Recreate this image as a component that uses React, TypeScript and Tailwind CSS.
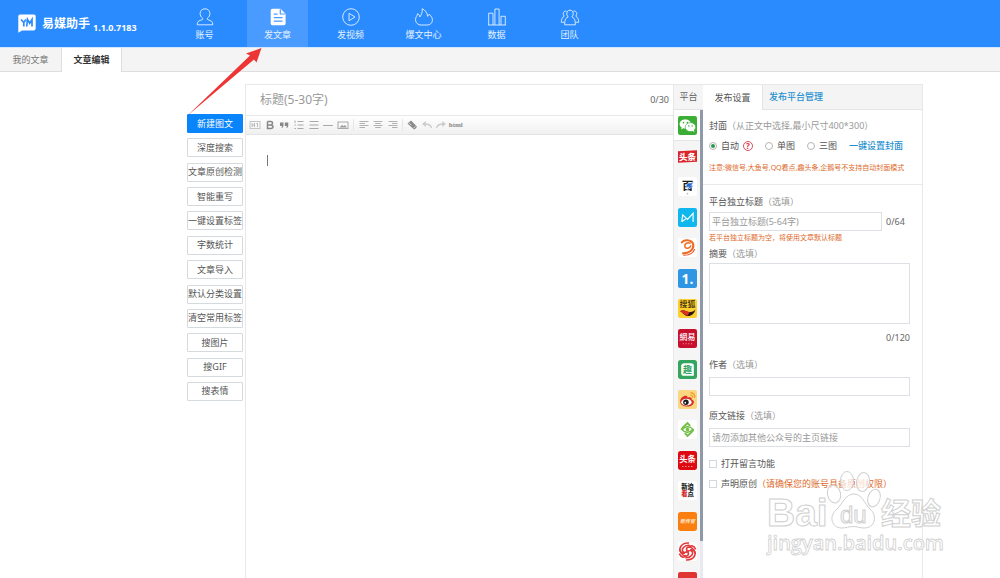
import { useState } from 'react';
import type { ReactNode } from 'react';
import clsx from 'clsx';

const navItems = [
  { id: 'account', label: '账号' },
  { id: 'article', label: '发文章' },
  { id: 'video', label: '发视频' },
  { id: 'hot', label: '爆文中心' },
  { id: 'data', label: '数据' },
  { id: 'team', label: '团队' },
];

const actions = [
  '新建图文',
  '深度搜索',
  '文章原创检测',
  '智能重写',
  '一键设置标签',
  '字数统计',
  '文章导入',
  '默认分类设置',
  '清空常用标签',
  '搜图片',
  '搜GIF',
  '搜表情',
];

const platforms = [
  'wechat', 'toutiao', 'baijia', 'dayu', 'kuaichuan', 'yidian', 'sohu', 'netease',
  'qutoutiao', 'weibo', 'iqiyi', 'toutiao2', 'sina', 'souhu', 'ifeng', 'more',
];

function NavIcon({ id }: { id: string }) {
  return (
    <svg className="h-[18px] w-5" viewBox="0 0 20 18" fill="none" stroke="#e4f1ff" strokeWidth="0.9" strokeLinejoin="round" aria-hidden="true">
      {id === 'account' && (
        <path d="M7.600 10.200C6 8.900 5.100 7.500 5.100 5.600C5.100 2.800 7 .8 10 .8C13 .8 14.900 2.800 14.900 5.600C14.900 7.500 14 8.900 12.400 10.200V11.400L16.500 13.200Q17.800 14 17.800 16.800H2.200Q2.200 14 3.500 13.200L7.600 11.400Z" />
      )}
      {id === 'article' && (
        <>
          <path d="M4.300 .8H12.500L17.600 5.800V15.500Q17.600 17.200 16 17.200H4.300Q2.700 17.200 2.700 15.500V2.500Q2.700 .8 4.300 .8Z" fill="#fff" stroke="none" />
          <path d="M12.300 1.200V6H17.300M5.800 6.200H9.600M5.800 9.700H14.500M5.800 13.200H14.500" stroke="#4a9bff" strokeWidth="1.200" />
        </>
      )}
      {id === 'video' && (
        <>
          <circle cx="10" cy="9" r="8.300" />
          <path d="M8 5.300L14 9L8 12.700Z" />
        </>
      )}
      {id === 'hot' && (
        <path d="M6 17C3 16.200 1.400 14 1.500 11.500C1.600 9 3.200 8 3.600 5.600C5 6.300 5.600 7.500 5.800 9C7.600 6.800 8.500 4.200 8.200 .7C11.500 2.300 13.300 5 13.600 8.300C14.600 7.900 15 7.200 15.100 6.100C17.500 8.200 18.700 10.500 18.400 12.600C18 15.200 16.400 16.600 13.900 17Z" />
      )}
      {id === 'data' && (
        <path d="M1 17H19M1.700 17V5.200H6V17M7.900 17V1H12.100V17M14 17V8.300H18.300V17" />
      )}
      {id === 'team' && (
        <>
          <path d="M8.200 8.900C5.800 7 6.500 2.200 10 2.200C13.500 2.200 14.200 7 11.800 8.900C14.500 9.900 15.400 12.200 15.400 16.800H4.600C4.600 12.200 5.500 9.900 8.200 8.900Z" />
          <path d="M6.700 3.200C3.800 2.200 2 5.600 4.200 8.200C2.200 9.200 1.300 11.500 1.300 14.300H4.400M13.300 3.200C16.200 2.200 18 5.600 15.800 8.200C17.800 9.200 18.700 11.500 18.700 14.300H15.600" />
        </>
      )}
    </svg>
  );
}

function PlatformIcon({ id }: { id: string }) {
  const cjk = '"Noto Sans CJK SC", sans-serif';
  return (
    <svg className="h-[19px] w-[19px]" viewBox="0 0 18 18" role="img" aria-label={id} fontFamily={cjk} textAnchor="middle">
      {id === 'wechat' && (
        <>
          <rect width="18" height="18" rx="2" fill="#3cae36" />
          <path d="M7 3.200C3.900 3.200 1.500 5.100 1.500 7.600C1.500 9 2.300 10.200 3.500 11L3 12.800L5.100 11.700Q6 12 7.200 12L11 9.500L12.500 7.500C12.200 5 9.900 3.200 7 3.200Z" fill="#fff" />
          <ellipse cx="11.800" cy="10.500" rx="5" ry="4.200" fill="#fff" stroke="#3cae36" strokeWidth=".6" />
          <path d="M13.500 13.800L15.600 15.300L15 13Z" fill="#fff" />
          <circle cx="5.200" cy="6.200" r=".8" fill="#3cae36" />
          <circle cx="8.900" cy="6.200" r=".8" fill="#3cae36" />
          <circle cx="10.200" cy="9.500" r=".7" fill="#3cae36" />
          <circle cx="13.400" cy="9.500" r=".7" fill="#3cae36" />
        </>
      )}
      {id === 'toutiao' && (
        <>
          <path d="M0 4L18 3V14L0 15Z" fill="#d9252b" />
          <text x="9" y="12" fontSize="8" fontWeight="900" fill="#fff">头条</text>
        </>
      )}
      {id === 'baijia' && (
        <>
          <rect width="18" height="18" rx="2" fill="#fff" />
          <text x="9" y="12.500" fontSize="11" fontWeight="700" fill="#1c1c1c">百</text>
          <path d="M8.500 6.500L15 5L12 8.300H15L8 12.700L10.500 9.300H7.300Z" fill="#2568d8" stroke="#fff" strokeWidth=".4" />
          <circle cx="9" cy="15.800" r=".8" fill="#bbb" />
        </>
      )}
      {id === 'dayu' && (
        <>
          <rect width="18" height="18" rx="2" fill="#10b7ee" />
          <path d="M3.500 13L4.500 6.500L9 10.800L14.300 5V13.200M3.500 13L7.400 10.300" fill="none" stroke="#fff" strokeWidth="1.100" />
        </>
      )}
      {id === 'kuaichuan' && (
        <>
          <rect width="18" height="18" rx="2" fill="#fff" />
          <path d="M3.500 5C3.500 1.500 13.500 .5 14.500 6.500C15 11 10.500 14.800 4 14.500" fill="none" stroke="#ee6c22" strokeWidth="2" />
          <path d="M12 5C9 3.500 6 5.500 6.500 8C7.200 10.800 11.500 10 12.300 7" fill="none" stroke="#ee6c22" strokeWidth="1.500" />
          <path d="M5 16.300C11 16.500 14.500 14 15.800 10.500" fill="none" stroke="#e8542a" strokeWidth="1.100" />
        </>
      )}
      {id === 'yidian' && (
        <>
          <rect width="18" height="18" rx="2" fill="#2f96e4" />
          <text x="9" y="13.800" fontSize="13" fontWeight="700" fill="#fff" fontFamily="Open Sans, sans-serif">1.</text>
        </>
      )}
      {id === 'sohu' && (
        <>
          <rect width="18" height="18" rx="2" fill="#fdd02e" />
          <text x="9" y="8" fontSize="7.500" fontWeight="500" fill="#33270c">搜狐</text>
          <path d="M2 11.500C5 9.500 7 11.500 9 12C12 12.700 14 12.500 16.500 10C15.500 14.500 12 17 8 16C6 15.300 4 12.500 2 11.500Z" fill="#2b1711" />
          <path d="M2 11.500C5 9.500 7 11.500 11 12.200L9 15.800C6 15 4 12.500 2 11.500Z" fill="#dd3022" />
        </>
      )}
      {id === 'netease' && (
        <>
          <rect width="18" height="18" rx="2" fill="#c8102e" />
          <text x="9" y="10.200" fontSize="7.500" fontWeight="500" fill="#fff">網易</text>
          <path d="M4.500 14H13.500" stroke="#f0a0a8" strokeDasharray="1 1.600" />
        </>
      )}
      {id === 'qutoutiao' && (
        <>
          <rect width="18" height="18" rx="2.500" fill="#34a55e" />
          <path d="M6 3H12.500Q15 3 15 5.500V15H6Q3 15 3 12V6Q3 3 6 3Z" fill="#fff" />
          <text x="9" y="12.200" fontSize="8.500" fontWeight="700" fill="#34a55e">趣</text>
        </>
      )}
      {id === 'weibo' && (
        <>
          <rect width="18" height="18" rx="2" fill="#fbd782" />
          <path d="M2 11C2 7.500 5.500 4.900 8 5.500C9 5.800 9 6.600 8.800 7.200C11.500 6.200 13.500 7 12.900 8.900C14.800 9.500 15.700 11 14.700 12.700C13.500 14.900 10.500 16 7.700 15.700C4.500 15.500 2 13.500 2 11Z" fill="#d92c25" />
          <ellipse cx="8" cy="11.500" rx="4.900" ry="3.300" fill="#fff" />
          <circle cx="7.500" cy="11.600" r="2.600" fill="#1d1d1d" />
          <circle cx="6.900" cy="12" r=".8" fill="#fff" />
          <path d="M11.500 2.800C14.500 2.200 16.500 4.800 15.700 7.500M11.700 5C13.300 4.700 14.200 5.900 13.800 7.200" fill="none" stroke="#ee9a27" strokeWidth="1.100" />
        </>
      )}
      {id === 'iqiyi' && (
        <>
          <rect width="18" height="18" rx="2" fill="#fff" />
          <path d="M3.500 9.500Q3.500 8 5 6.500L9 3L11.500 5.500M14.500 8.500Q14.500 10 13 11.500L9 15L6.500 12.500" fill="none" stroke="#71bf44" strokeWidth="1.800" />
          <path d="M4 9.300C6.500 5.600 11.500 5.600 14 8.700C11.500 12.400 6.500 12.400 4 9.300Z" fill="none" stroke="#71bf44" strokeWidth="1.300" />
          <circle cx="9" cy="9" r="1.700" fill="#71bf44" />
        </>
      )}
      {id === 'toutiao2' && (
        <>
          <rect width="18" height="18" rx="2.500" fill="#dd0a12" />
          <text x="9" y="10.500" fontSize="7.800" fontWeight="700" fill="#fff">头条</text>
          <path d="M4 14.700H14" stroke="#ff9c9c" strokeDasharray="1.200 1.600" />
        </>
      )}
      {id === 'sina' && (
        <>
          <rect width="18" height="18" rx="2" fill="#fff" />
          <text x="9" y="8" fontSize="6" fontWeight="900" fill="#222">新浪</text>
          <text x="9" y="14.500" fontSize="6" fontWeight="900" fill="#222">
            <tspan fill="#d7262c">看</tspan>点
          </text>
        </>
      )}
      {id === 'souhu' && (
        <>
          <rect width="18" height="18" rx="2.500" fill="#fb7f10" />
          <text x="9" y="10.800" fontSize="4.700" fontWeight="700" fontStyle="italic" fill="#ffe9d2">新传官</text>
        </>
      )}
      {id === 'ifeng' && (
        <>
          <rect width="18" height="18" rx="2" fill="#fff" />
          <g fill="none" stroke="#e23a3c" strokeWidth="1.500">
            <path d="M9 9C5 11.500 3 8 5 5.500C6.500 3.500 9 3 11 3.200M6.500 10.500C3 11.500 .5 8 2.500 4.500C4 2 7.500 .8 10.500 1" />
            <path d="M9 9C13 6.500 15 10 13 12.500C11.500 14.500 9 15 7 14.800M11.500 7.500C15 6.500 17.500 10 15.500 13.500C14 16 10.500 17.200 7.500 17" />
            <path d="M9 9C6.500 5.500 10 3.500 13 5.500C15 7 16 9 16.500 11M10 5.500C11.500 2.500 15 3 16.800 7" />
            <path d="M9 9C11.500 12.500 8 14.500 5 12.500C3 11 2 9 1.500 7M8 12.500C6.500 15.500 3 15 1.200 11" />
          </g>
        </>
      )}
      {id === 'more' && <rect width="18" height="18" rx="2" fill="#df3532" />}
    </svg>
  );
}

function Tool({ label, children }: { label: string; children: ReactNode }) {
  return (
    <button type="button" aria-label={label} className="flex h-4 items-center justify-center">
      <svg className="h-3 w-3" viewBox="0 0 12 12" fill="none" stroke="#a9a9a9" strokeWidth="1" aria-hidden="true">
        {children}
      </svg>
    </button>
  );
}

function Toolbar() {
  return (
    <div className="flex h-[19px] items-center border-b border-[#e4e4e4] bg-gradient-to-b from-white to-[#f0f0f0] pl-0.5">
      <div className="grid w-[102px] grid-cols-7">
        <Tool label="标题">
          <rect x="1" y="2.500" width="10" height="7" stroke="#c4c4c4" />
          <path d="M3 4V8M5.500 4V8M3 6H5.500M8.500 4V8M7.500 4.500H8.500" strokeWidth=".8" />
        </Tool>
        <Tool label="加粗">
          <path d="M3.500 2.500H6.800Q8.700 2.700 8.500 4.300Q8.300 5.800 6.500 5.900H3.500M6.500 5.900Q9 6 9 7.800Q9 9.500 6.800 9.500H3.500V2.500" stroke="#888" strokeWidth="1.500" />
        </Tool>
        <Tool label="引用">
          <path d="M2 3.500H5.500V6.500Q5.400 8.500 3.500 9.200L4 7H2ZM6.800 3.500H10.300V6.500Q10.200 8.500 8.300 9.200L8.800 7H6.800Z" fill="#888" stroke="none" />
        </Tool>
        <Tool label="编号列表">
          <path d="M4.500 2.500H10.500M4.500 6H10.500M4.500 9.500H10.500M2 1.500V4M1.500 6H3M1.500 9.500H3" />
        </Tool>
        <Tool label="列表">
          <path d="M1.500 2.500H10.500M1.500 6H10.500M1.500 9.500H10.500" />
        </Tool>
        <Tool label="分割线">
          <path d="M1 6.500H11" />
        </Tool>
        <Tool label="图片">
          <rect x="1" y="3" width="10" height="6.500" />
          <path d="M2.500 8.500L5 6L6.500 7.300L8 6L9.800 8.500Z" fill="#999" stroke="none" />
        </Tool>
      </div>
      <div className="mx-[3px] h-3 w-px bg-gray-200" />
      <div className="grid w-[43px] grid-cols-3">
        <Tool label="左对齐">
          <path d="M1.500 2.500H10.500M1.500 4.500H7M1.500 6.500H10.500M1.500 8.500H7" strokeWidth=".9" />
        </Tool>
        <Tool label="居中">
          <path d="M1.500 2.500H10.500M3.200 4.500H8.800M1.500 6.500H10.500M3.200 8.500H8.800" strokeWidth=".9" />
        </Tool>
        <Tool label="右对齐">
          <path d="M1.500 2.500H10.500M5 4.500H10.500M1.500 6.500H10.500M5 8.500H10.500" strokeWidth=".9" />
        </Tool>
      </div>
      <div className="mx-0.5 h-3 w-px bg-gray-200" />
      <div className="grid w-[58px] grid-cols-4">
        <Tool label="清除格式">
          <path d="M1.500 4.500L5 1.500L10.800 7.500Q10.800 9.500 8 10.500Z" fill="#8a8a8a" stroke="none" />
          <path d="M3 3.700L5.300 6.200M7.500 9L9.500 7.500" stroke="#fff" strokeWidth=".7" />
        </Tool>
        <Tool label="撤销">
          <path d="M10.500 9Q9.500 5 4 5" stroke="#ccc" strokeWidth="1.300" />
          <path d="M1 5L4.800 2V8Z" fill="#ccc" stroke="none" />
        </Tool>
        <Tool label="重做">
          <path d="M1.500 9Q2.500 5 8 5" stroke="#ccc" strokeWidth="1.300" />
          <path d="M11 5L7.200 2V8Z" fill="#ccc" stroke="none" />
        </Tool>
        <button type="button" className="flex h-4 items-center justify-center font-['Liberation_Serif',serif] text-[7px] leading-none font-bold text-[#888]">
          html
        </button>
      </div>
    </div>
  );
}

function Label({ htmlFor, text, hint = '（选填）' }: { htmlFor?: string; text: string; hint?: string }) {
  return (
    <label htmlFor={htmlFor} className="block h-3 leading-3 whitespace-nowrap text-[#555]">
      {text}
      <span className="text-[#999]">{hint}</span>
    </label>
  );
}

const boxClass = 'border border-[#dcdfe3] bg-white px-[2px] text-[9px] text-[#555] outline-none placeholder:text-[#999]';

function SettingsPanel() {
  const [cover, setCover] = useState('自动');
  const [ownTitle, setOwnTitle] = useState('');
  const [summary, setSummary] = useState('');

  return (
    <aside className="flex w-[220px] shrink-0 flex-col border-r border-[#e8e8e8]">
      <div className="flex h-[25px] border-b border-[#e4e4e4] bg-[#f4f4f4]">
        <button type="button" className="-mb-px w-[60px] shrink-0 border-r border-[#e4e4e4] bg-white text-[#555]">
          发布设置
        </button>
        <button type="button" className="px-[6px] font-medium text-[#2490cf]">发布平台管理</button>
      </div>

      <fieldset className="border-b border-[#e8e8e8] px-[6px] pt-[10px] pb-[10px]">
        <Label text="封面" hint="（从正文中选择,最小尺寸400*300）" />
        <div className="mt-2 flex h-3 items-center whitespace-nowrap text-[#555]">
          {['自动', '单图', '三图'].map((name) => (
            <label key={name} className="mr-3 flex items-center gap-1">
              <input
                type="radio"
                name="cover"
                checked={cover === name}
                onChange={() => setCover(name)}
                className="h-2 w-2 appearance-none rounded-full border border-[#b5b5b5] bg-white bg-clip-content p-px checked:bg-[#2e9950]"
              />
              {name}
              {name === '自动' && (
                <span className="flex h-[10px] w-[10px] items-center justify-center rounded-full border border-[#d9505c] text-[8px] leading-none font-bold text-[#d9303c]">
                  ?
                </span>
              )}
            </label>
          ))}
          <a href="#cover" className="font-medium text-[#2490cf]">一键设置封面</a>
        </div>
        <p className="mt-[10px] h-3 text-[7px] leading-3 whitespace-nowrap text-[#dd6a2b]">
          注意:微信号,大鱼号,QQ看点,趣头条,企鹅号不支持自动封面模式
        </p>
      </fieldset>

      <div className="flex flex-col pt-[11px] pr-3 pl-[6px]">
        <Label htmlFor="own-title" text="平台独立标题" />
        <div className="mt-1 flex items-center gap-1 text-[#666]">
          <input
            id="own-title"
            value={ownTitle}
            onChange={(e) => setOwnTitle(e.target.value)}
            placeholder="平台独立标题(5-64字)"
            className={clsx(boxClass, 'h-[19px] w-[173px]')}
          />
          <span>{ownTitle.length}/64</span>
        </div>
        <p className="mt-px h-3 text-[7px] leading-3 text-[#dd6a2b]">若平台独立标题为空，将使用文章默认标题</p>
        <div className="mt-1">
          <Label htmlFor="summary" text="摘要" />
        </div>
        <textarea
          id="summary"
          value={summary}
          onChange={(e) => setSummary(e.target.value)}
          className={clsx(boxClass, 'mt-[3px] h-[61px] resize-none')}
        />
        <span className="mt-2 h-3 text-right leading-3 text-[#666]">{summary.length}/120</span>
        <div className="mt-[15px]">
          <Label htmlFor="author" text="作者" />
        </div>
        <input id="author" className={clsx(boxClass, 'mt-[6px] h-[19px]')} />
        <div className="mt-[14px]">
          <Label htmlFor="link" text="原文链接" />
        </div>
        <input id="link" placeholder="请勿添加其他公众号的主页链接" className={clsx(boxClass, 'mt-[6px] h-[19px]')} />
        <label className="mt-[11px] flex h-3 items-center gap-1 text-[#555]">
          <input type="checkbox" className="h-2 w-2 appearance-none border border-[#d3d8de] checked:bg-[#2e9950]" />
          打开留言功能
        </label>
        <label className="mt-2 flex h-3 items-center gap-1 whitespace-nowrap text-[#555]">
          <input type="checkbox" className="h-2 w-2 appearance-none border border-[#d3d8de] checked:bg-[#2e9950]" />
          <span>
            声明原创<span className="text-[#dd6a2b]">（请确保您的账号具备原创权限）</span>
          </span>
        </label>
      </div>
    </aside>
  );
}

function Watermark() {
  return (
    <svg
      className="pointer-events-none absolute right-[50px] bottom-[18px] h-[92px] w-[184px]"
      viewBox="0 0 184 92"
      fill="#fff"
      fillOpacity=".7"
      stroke="#cfcfcf"
      strokeWidth="1"
      aria-hidden="true"
    >
      <text x="1" y="58" fontSize="39" fontWeight="700" fontFamily="Liberation Sans, sans-serif">Bai</text>
      <ellipse cx="68" cy="26" rx="6.500" ry="9" transform="rotate(-14 68 26)" />
      <ellipse cx="81" cy="13" rx="6.500" ry="9.500" />
      <ellipse cx="97" cy="14" rx="6.500" ry="9.500" transform="rotate(10 97 14)" />
      <ellipse cx="108" cy="30" rx="6" ry="9" transform="rotate(18 108 30)" />
      <path d="M88 26C96 26 98 35 104 41C112 48 109 60 98 60C94 60 91 58.500 87 58.500C83 58.500 80 60 76 60C65 60 63 48 70 42C77 36 79 26 88 26Z" />
      <text x="74" y="55" fontSize="24" fontFamily="Liberation Sans, sans-serif">du</text>
      <text x="115" y="56" fontSize="30" fontWeight="700" fontFamily="Noto Sans CJK SC, sans-serif">经验</text>
      <text x="1" y="82" fontSize="20" fontWeight="600" fontFamily="Open Sans, sans-serif" strokeWidth=".8">jingyan.baidu.com</text>
    </svg>
  );
}

export default function App() {
  const [activeNav, setActiveNav] = useState('article');
  const [title, setTitle] = useState('');

  return (
    <div className="relative flex h-screen flex-col overflow-hidden bg-white font-['Noto_Sans','Noto_Sans_CJK_SC',sans-serif] text-[9px] leading-3 text-[#555]">
      <header className="flex h-[47px] shrink-0 bg-[#2a8bff] text-white">
        <div className="flex w-[174px] shrink-0 items-center pl-[18px]">
          <svg className="h-[19px] w-[18px] shrink-0" viewBox="0 0 18 19" aria-hidden="true">
            <path d="M2 .5H16Q17.700 .5 17.700 2.200V14.300Q17.700 16.500 15.500 16.500H4L.3 18.700V2.200Q.3 .5 2 .5Z" fill="#fff" />
            <path d="M3 5.500L5.800 8.500L8 5.500M5.800 8.500V12.500M8.700 12.500L9.500 5.500L11.700 9.300L14 5.500V12.500" fill="none" stroke="#2a8bff" strokeWidth="1.700" />
          </svg>
          <h1 className="ml-[6px] text-[12px] leading-4 font-bold whitespace-nowrap">易媒助手</h1>
          <span className="mt-2 ml-[3px] font-bold">1.1.0.7183</span>
        </div>
        <nav className="flex gap-3">
          {navItems.map((item) => (
            <button
              key={item.id}
              type="button"
              onClick={() => setActiveNav(item.id)}
              className={clsx(
                'flex w-[61px] flex-col items-center pt-2 text-[#e4f1ff]',
                activeNav === item.id && 'bg-[#4a9bff]',
              )}
            >
              <NavIcon id={item.id} />
              <span className="mt-[3px]">{item.label}</span>
            </button>
          ))}
        </nav>
      </header>

      <div className="flex h-[25px] shrink-0 border-t border-b border-t-[#d5e7fb] border-b-[#dedede] bg-[#f4f4f4]">
        <button type="button" className="w-[62px] border-r border-[#dedede] text-[#777]">我的文章</button>
        <button type="button" className="-mb-px w-[60px] border-r border-[#dedede] bg-white font-bold text-[#333]">
          文章编辑
        </button>
      </div>

      <main className="flex min-h-0 flex-1 pt-3 pr-[77px] pl-[187px]">
        <div className="mr-0.5 flex h-[317px] w-14 shrink-0 flex-col justify-between pt-[30px]">
          {actions.map((action, i) => (
            <button
              key={action}
              type="button"
              className={clsx(
                'flex h-[19px] items-center justify-center rounded-[1px] border whitespace-nowrap',
                i === 0 ? 'border-[#0a84fb] bg-[#0a84fb] text-white' : 'border-[#d5dade] bg-white text-[#555]',
              )}
            >
              {action}
            </button>
          ))}
        </div>

        <div className="flex min-w-0 flex-1 border-t border-l border-[#e8e8e8]">
          <section className="flex min-w-0 flex-1 flex-col">
            <div className="flex h-[31px] items-center border-b border-[#e8e8e8] pr-1 pl-[14px]">
              <input
                aria-label="标题"
                value={title}
                onChange={(e) => setTitle(e.target.value)}
                placeholder="标题(5-30字)"
                className="min-w-0 flex-1 text-[12px] leading-4 outline-none placeholder:text-[#999]"
              />
              <span className="text-[#666]">{title.length}/30</span>
            </div>
            <Toolbar />
            <div role="textbox" aria-label="正文" tabIndex={0} className="flex-1 px-[21px] py-5 outline-none">
              <span className="block h-[11px] w-px bg-[#777]" />
            </div>
          </section>

          <div className="flex w-[30px] shrink-0 flex-col border-l border-[#e8e8e8] bg-[#f5f5f5]">
            <div className="flex h-[25px] shrink-0 items-center justify-center border-b border-[#e4e4e4] text-[#666]">平台</div>
            <div className="flex min-h-0 flex-1 overflow-hidden">
              <ul className="flex h-[487px] flex-1 flex-col">
                {platforms.map((id, i) => (
                  <li key={id} className={clsx('flex flex-1 items-center justify-center', i === 0 && 'border-b border-[#e4e4e4] bg-white')}>
                    <PlatformIcon id={id} />
                  </li>
                ))}
              </ul>
              <div className="w-[3px] bg-[#e9e9ef]">
                <div className="h-[92%] bg-[#8f99a8]" />
              </div>
            </div>
          </div>

          <SettingsPanel />
        </div>
      </main>

      <svg className="pointer-events-none absolute top-[46px] left-[186px] h-[71px] w-[77px]" viewBox="0 0 77 71" aria-hidden="true">
        <path d="M1 70L64 9.500L60 7.500L75.500 2L70.500 16.500L68 13.500Z" fill="#ee3535" />
      </svg>
      <Watermark />
    </div>
  );
}
